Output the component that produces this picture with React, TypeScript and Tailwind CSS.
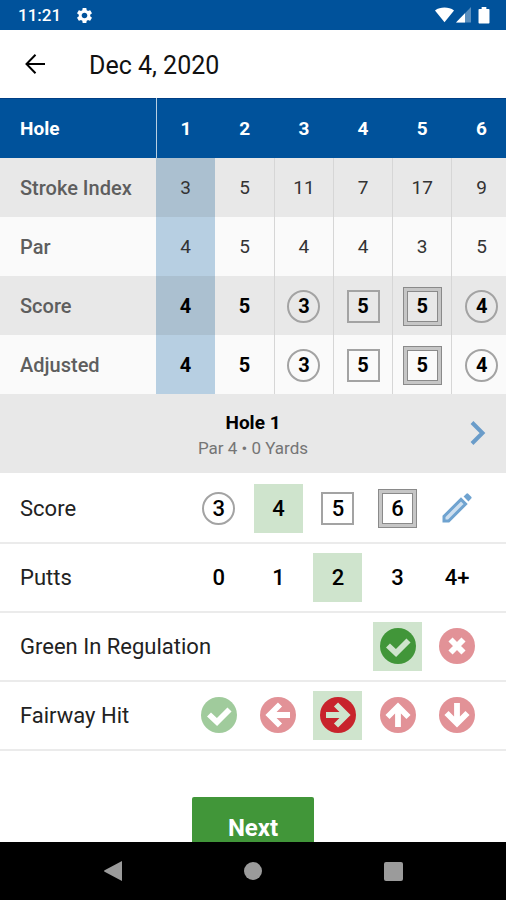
import React, { useState } from "react";
import clsx from "clsx";
import { MdSettings } from "react-icons/md";

type Mark = "none" | "circle" | "square" | "double";

type Hole = {
  hole: number;
  index: number;
  par: number;
  score: number;
};

const holes: Hole[] = [
  { hole: 1, index: 3, par: 4, score: 4 },
  { hole: 2, index: 5, par: 5, score: 5 },
  { hole: 3, index: 11, par: 4, score: 3 },
  { hole: 4, index: 7, par: 4, score: 5 },
  { hole: 5, index: 17, par: 3, score: 5 },
  { hole: 6, index: 9, par: 5, score: 4 },
];

// birdie = circle, bogey = square, double bogey = two squares
const getMark = (score: number, par: number): Mark => {
  if (score < par) return "circle";
  if (score === par + 1) return "square";
  if (score > par + 1) return "double";
  return "none";
};

type ScoreMarkProps = {
  value: number;
  mark: Mark;
};

const ScoreMark = ({ value, mark }: ScoreMarkProps) => {
  if (mark === "double")
    return (
      <span className="inline-flex size-[39px] border border-[#8a8a8a]">
        <span className="flex size-full border-3 border-[#c6c6c6]">
          <span className="flex size-full items-center justify-center border border-[#8a8a8a]">
            {value}
          </span>
        </span>
      </span>
    );

  return (
    <span
      className={clsx(
        "inline-flex size-[33px] items-center justify-center",
        mark !== "none" && "border-2 border-[#a3a3a3]",
        mark === "circle" && "rounded-full"
      )}
    >
      {value}
    </span>
  );
};

const glyphs = {
  check: { d: "M8 17.5 16 25 28.5 12.500", rotate: 0 },
  cross: { d: "M11.5 11.5 24.5 24.5M24.5 11.5 11.5 24.5", rotate: 0 },
  left: { d: "M20 7.5 9.5 18 20 28.5M9.5 18H30", rotate: 0 },
  up: { d: "M20 7.5 9.5 18 20 28.5M9.5 18H30", rotate: 90 },
  right: { d: "M20 7.5 9.5 18 20 28.5M9.5 18H30", rotate: 180 },
  down: { d: "M20 7.5 9.5 18 20 28.5M9.5 18H30", rotate: 270 },
};

type CircleIconProps = {
  glyph: keyof typeof glyphs;
  selected: boolean;
};

const CircleIcon = ({ glyph, selected }: CircleIconProps) => {
  const { d, rotate } = glyphs[glyph];
  const good = glyph === "check";

  return (
    <svg
      width="36"
      height="36"
      viewBox="0 0 36 36"
      className={clsx(
        good && (selected ? "text-[#419639]" : "text-[#a0cb9c]"),
        !good && (selected ? "text-[#c8232c]" : "text-[#e29297]")
      )}
    >
      <circle cx="18" cy="18" r="18" fill="currentColor" />
      <path
        d={d}
        transform={`rotate(${rotate} 18 18)`}
        fill="none"
        stroke={selected ? "#cfe4cd" : "#ffffff"}
        strokeWidth="5.8"
      />
    </svg>
  );
};

const StatusBar = () => (
  <div className="flex h-[30px] shrink-0 items-center justify-between bg-[#00529b] pr-4 pl-[18px] text-white">
    <div className="flex items-center gap-[14px]">
      <span className="pt-[2px] text-[17px] font-medium">11:21</span>
      <MdSettings size={19} />
    </div>
    <div className="flex items-center gap-[2px]">
      <svg width="19" height="16" viewBox="0 0 20 16" fill="currentColor">
        <path d="M0 3.2C5.5-.8 14.5-.8 20 3.2L10 15.5z" />
      </svg>
      <svg width="15" height="16" viewBox="0 0 15 16" fill="currentColor">
        <path d="M15 0v15.5H0z" opacity=".35" />
        <path d="M9 6.2v9.3H0z" />
      </svg>
      <svg
        className="ml-[5px]"
        width="12"
        height="17"
        viewBox="0 0 12 18"
        fill="currentColor"
      >
        <path d="M3.500 0h5v2H11a.8.8 0 0 1 .8.8v13.900a.8.8 0 0 1-.8.8H1a.8.8 0 0 1-.8-.8V2.800A.8.8 0 0 1 1 2h2.500z" />
      </svg>
    </div>
  </div>
);

type TableRowProps = {
  label: string;
  shaded?: boolean;
  children: (h: Hole) => React.ReactNode;
  bold?: boolean;
  current: number;
};

const TableRow = ({ label, shaded, children, bold, current }: TableRowProps) => (
  <tr className={clsx("h-[59px]", shaded ? "bg-[#e8e8e8]" : "bg-[#fafafa]")}>
    <th
      scope="row"
      className="pt-[2px] pl-5 text-left text-[20px] font-medium text-[#5e5e5e]"
    >
      {label}
    </th>
    {holes.map((h) => (
      <td
        key={h.hole}
        className={clsx(
          "px-0 pt-[2px] pb-0 text-center",
          bold
            ? "text-[20px] font-bold text-black"
            : "text-[19px] text-[#333333]",
          h.hole > 2 && "border-l border-[#d6d6d6]",
          h.hole === current && (shaded ? "bg-[#abc0d0]" : "bg-[#b7cfe2]")
        )}
      >
        <div className="flex items-center justify-center">{children(h)}</div>
      </td>
    ))}
  </tr>
);

type OptionProps = {
  label: string;
  selected: boolean;
  onClick: () => void;
  children: React.ReactNode;
};

const Option = ({ label, selected, onClick, children }: OptionProps) => (
  <button
    type="button"
    aria-label={label}
    aria-pressed={selected}
    onClick={onClick}
    className={clsx(
      "flex size-[49px] items-center justify-center",
      selected && "bg-[#cfe4cd]"
    )}
  >
    {children}
  </button>
);

type FieldRowProps = {
  label: string;
  children: React.ReactNode;
};

const FieldRow = ({ label, children }: FieldRowProps) => (
  <div
    role="group"
    aria-label={label}
    className="flex items-center justify-between border-b-2 border-[#ebebeb] py-[9px] pr-[19px] pl-5"
  >
    <span className="flex-1 text-[22px] whitespace-nowrap text-[#222222]">
      {label}
    </span>
    <div className="-ml-10 grid w-[298px] grid-cols-5 justify-items-center text-[22px] font-medium text-black">
      {children}
    </div>
  </div>
);

const scoreOptions = [3, 4, 5, 6];
const puttOptions = ["0", "1", "2", "3", "4+"];
const fairwayOptions = ["check", "left", "right", "up", "down"] as const;

const App = () => {
  const [score, setScore] = useState(4);
  const [putts, setPutts] = useState("2");
  const [green, setGreen] = useState(true);
  const [fairway, setFairway] = useState("right");

  const current = holes[0];

  return (
    <div className="flex h-screen flex-col overflow-hidden bg-white font-[Roboto,'Liberation_Sans',sans-serif]">
      <StatusBar />

      <header className="flex h-[68px] shrink-0 items-center gap-[40px] px-[21px]">
        <button type="button" aria-label="Back" className="text-black">
          <svg
            width="28"
            height="28"
            viewBox="0 0 28 28"
            fill="none"
            stroke="currentColor"
            strokeWidth="2"
          >
            <path d="M14.5 4.8 5.5 14l9 9.2M5.5 14H24" />
          </svg>
        </button>
        <h1 className="pt-1 text-[25px] text-[#111111]">Dec 4, 2020</h1>
      </header>

      <main className="min-h-0 flex-1 overflow-hidden">
        <div className="overflow-x-auto [scrollbar-width:none]">
          <table className="w-full min-w-[511px] table-fixed border-collapse">
            <thead>
              <tr className="h-[59px] border-t border-[#003f85] bg-[#00529b] text-[19px] font-bold text-white">
                <th scope="col" className="w-[156px] pt-[2px] pl-5 text-left">
                  Hole
                </th>
                {holes.map((h) => (
                  <th
                    key={h.hole}
                    scope="col"
                    className={clsx(
                      "px-0 pt-[2px] pb-0 text-center",
                      h.hole === 1 && "border-l border-[#b7cfe2]"
                    )}
                  >
                    {h.hole}
                  </th>
                ))}
              </tr>
            </thead>
            <tbody>
              <TableRow label="Stroke Index" shaded current={current.hole}>
                {(h) => h.index}
              </TableRow>
              <TableRow label="Par" current={current.hole}>
                {(h) => h.par}
              </TableRow>
              <TableRow label="Score" shaded bold current={current.hole}>
                {(h) => (
                  <ScoreMark value={h.score} mark={getMark(h.score, h.par)} />
                )}
              </TableRow>
              <TableRow label="Adjusted" bold current={current.hole}>
                {(h) => (
                  <ScoreMark value={h.score} mark={getMark(h.score, h.par)} />
                )}
              </TableRow>
            </tbody>
          </table>
        </div>

        <section className="relative flex h-[79px] flex-col items-center justify-center bg-[#e8e8e8] pt-[3px]">
          <h2 className="text-[19px] leading-[26px] font-bold text-black">
            Hole {current.hole}
          </h2>
          <p className="text-[17px] leading-6 text-[#757575]">
            Par {current.par} • 0 Yards
          </p>
          <button
            type="button"
            aria-label="Next hole"
            className="absolute inset-y-0 right-5 flex items-center text-[#6a9cc9]"
          >
            <svg
              width="16"
              height="24"
              viewBox="0 0 16 24"
              fill="none"
              stroke="currentColor"
              strokeWidth="4"
            >
              <path d="M2 1.5 12.5 12 2 22.5" />
            </svg>
          </button>
        </section>

        <div className="pt-[2px]">
          <FieldRow label="Score">
            {scoreOptions.map((s) => (
              <Option
                key={s}
                label={`Score ${s}`}
                selected={score === s}
                onClick={() => setScore(s)}
              >
                <ScoreMark value={s} mark={getMark(s, current.par)} />
              </Option>
            ))}
            <button
              type="button"
              aria-label="Edit score"
              className="flex size-[49px] items-center justify-center"
            >
              <svg width="30" height="30" viewBox="0 0 30 30">
                <path
                  d="M2 28v-4.600L19 6.400l4.600 4.600L6.600 28z"
                  fill="#cfe0f0"
                  stroke="#6fa3d0"
                  strokeWidth="3"
                />
                <path
                  d="m21.600 3.600 2.800-2.800a1.300 1.300 0 0 1 1.800 0l3 3a1.300 1.300 0 0 1 0 1.800l-2.800 2.800z"
                  fill="#6fa3d0"
                />
              </svg>
            </button>
          </FieldRow>

          <FieldRow label="Putts">
            {puttOptions.map((p) => (
              <Option
                key={p}
                label={`${p} putts`}
                selected={putts === p}
                onClick={() => setPutts(p)}
              >
                {p}
              </Option>
            ))}
          </FieldRow>

          <FieldRow label="Green In Regulation">
            <div className="col-start-4">
              <Option
                label="Yes"
                selected={green}
                onClick={() => setGreen(true)}
              >
                <CircleIcon glyph="check" selected={green} />
              </Option>
            </div>
            <Option
              label="No"
              selected={!green}
              onClick={() => setGreen(false)}
            >
              <CircleIcon glyph="cross" selected={!green} />
            </Option>
          </FieldRow>

          <FieldRow label="Fairway Hit">
            {fairwayOptions.map((f) => (
              <Option
                key={f}
                label={f}
                selected={fairway === f}
                onClick={() => setFairway(f)}
              >
                <CircleIcon glyph={f} selected={fairway === f} />
              </Option>
            ))}
          </FieldRow>
        </div>

        <div className="flex justify-center pt-[46px]">
          <button
            type="button"
            className="h-[62px] rounded-xs bg-[#419639] px-9 text-[24px] font-bold text-white"
          >
            Next
          </button>
        </div>
      </main>

      <nav className="flex h-[58px] shrink-0 items-center justify-center gap-[122px] bg-black text-[#9b9b9b]">
        <button type="button" aria-label="System back">
          <svg width="18" height="20" viewBox="0 0 18 20" fill="currentColor">
            <path d="M18 0v20L.6 10.800a.9.9 0 0 1 0-1.600z" />
          </svg>
        </button>
        <button
          type="button"
          aria-label="Home"
          className="size-[18px] rounded-full bg-[#9b9b9b]"
        />
        <button
          type="button"
          aria-label="Recent apps"
          className="size-[19px] rounded-xs bg-[#9b9b9b]"
        />
      </nav>
    </div>
  );
};

export default App;
